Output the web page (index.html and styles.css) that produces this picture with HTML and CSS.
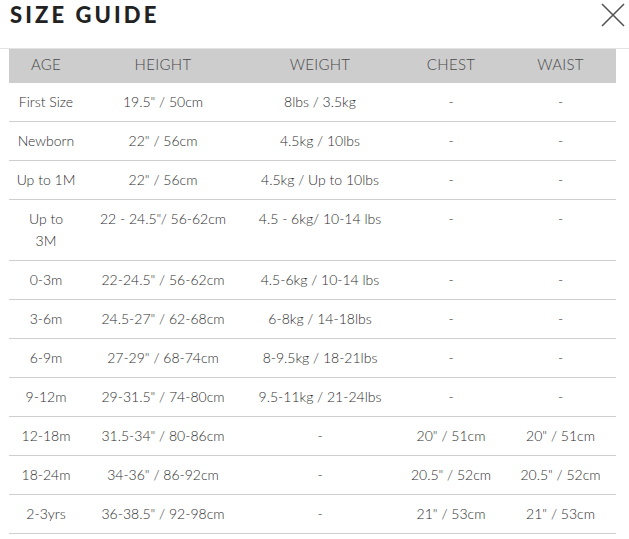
FILE: index.html
```html
<!DOCTYPE html>
<html>
<head>
<meta charset="utf-8">
<link rel="stylesheet" href="styles.css">
</head>
<body>
<div class="modal-head">
  <h1 class="title">SIZE GUIDE</h1>
  <button class="close" aria-label="Close">
    <svg width="24" height="24" viewBox="0 0 24 24"><path d="M1 1 L23 23 M23 1 L1 23" stroke="#555" stroke-width="1.6" fill="none"/></svg>
  </button>
</div>
<table class="sizes">
  <colgroup>
    <col class="c-age"><col class="c-height"><col class="c-weight"><col class="c-chest"><col class="c-waist">
  </colgroup>
  <thead>
    <tr><th>AGE</th><th>HEIGHT</th><th>WEIGHT</th><th>CHEST</th><th>WAIST</th></tr>
  </thead>
  <tbody>
    <tr><td>First Size</td><td>19.5" / 50cm</td><td>8lbs / 3.5kg</td><td>-</td><td>-</td></tr>
    <tr><td>Newborn</td><td>22" / 56cm</td><td>4.5kg / 10lbs</td><td>-</td><td>-</td></tr>
    <tr><td>Up to 1M</td><td>22" / 56cm</td><td>4.5kg / Up to 10lbs</td><td>-</td><td>-</td></tr>
    <tr class="top"><td>Up to<br>3M</td><td>22 - 24.5"/ 56-62cm</td><td>4.5 - 6kg/ 10-14 lbs</td><td>-</td><td>-</td></tr>
    <tr><td>0-3m</td><td>22-24.5" / 56-62cm</td><td>4.5-6kg / 10-14 lbs</td><td>-</td><td>-</td></tr>
    <tr><td>3-6m</td><td>24.5-27" / 62-68cm</td><td>6-8kg / 14-18lbs</td><td>-</td><td>-</td></tr>
    <tr><td>6-9m</td><td>27-29" / 68-74cm</td><td>8-9.5kg / 18-21lbs</td><td>-</td><td>-</td></tr>
    <tr><td>9-12m</td><td>29-31.5" / 74-80cm</td><td>9.5-11kg / 21-24lbs</td><td>-</td><td>-</td></tr>
    <tr><td>12-18m</td><td>31.5-34" / 80-86cm</td><td>-</td><td>20" / 51cm</td><td>20" / 51cm</td></tr>
    <tr><td>18-24m</td><td>34-36" / 86-92cm</td><td>-</td><td>20.5" / 52cm</td><td>20.5" / 52cm</td></tr>
    <tr><td>2-3yrs</td><td>36-38.5" / 92-98cm</td><td>-</td><td>21" / 53cm</td><td>21" / 53cm</td></tr>
  </tbody>
</table>
</body>
</html>
```
FILE: styles.css
```css
html, body {
  margin: 0;
  padding: 0;
  background: #fff;
}
body {
  font-family: "Lato", "Liberation Sans", sans-serif;
  color: #444;
}
.modal-head {
  display: flex;
  justify-content: space-between;
  align-items: flex-start;
  height: 48px;
  border-bottom: 1px solid #e3e3e3;
  padding: 0 4px 0 10px;
}
.title {
  margin: 0;
  font-size: 22px;
  line-height: 30px;
  font-weight: 900;
  letter-spacing: 3.1px;
  color: #222;
}
.close {
  border: 0;
  background: none;
  padding: 0;
  margin-top: 3px;
  width: 24px;
  height: 24px;
}
.close svg { display: block; }
.sizes {
  margin-left: 9px;
  width: 607px;
  border-collapse: collapse;
  table-layout: fixed;
  font-size: 14px;
}
.c-age { width: 74px; }
.c-height { width: 160px; }
.c-weight { width: 154px; }
.c-chest { width: 108px; }
.c-waist { width: 111px; }
.sizes th {
  background: #cdcdcd;
  color: #4a4a4a;
  font-weight: 300;
  font-size: 15px;
  letter-spacing: 0.3px;
  height: 31px;
  line-height: 30px;
  padding: 0 0 4px;
  text-align: center;
  box-sizing: border-box;
}
.sizes td {
  text-align: center;
  padding: 8px 2px;
  line-height: 22px;
  border-bottom: 1px solid #cfcfcf;
  white-space: nowrap;
  color: #2e2e2e;
  font-weight: 300;
}
.sizes tr.top td {
  vertical-align: top;
}
```
